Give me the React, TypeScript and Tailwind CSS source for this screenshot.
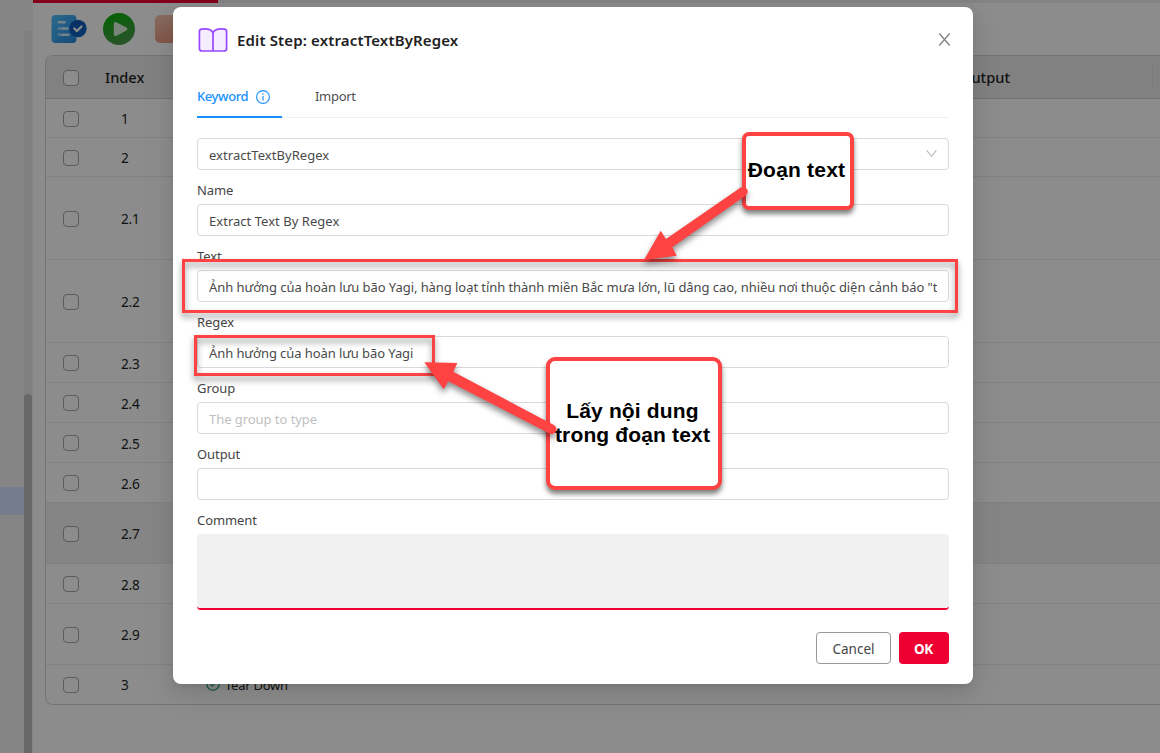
import type { ReactNode } from "react";

const rows = [
  { index: "1", height: "h-[39px]" },
  { index: "2", height: "h-[39px]" },
  { index: "2.1", height: "h-[83px]" },
  { index: "2.2", height: "h-[83px]" },
  { index: "2.3", height: "h-10" },
  { index: "2.4", height: "h-10" },
  { index: "2.5", height: "h-10" },
  { index: "2.6", height: "h-10" },
  { index: "2.7", height: "h-[61px]", active: true },
  { index: "2.8", height: "h-10" },
  { index: "2.9", height: "h-[61px]" },
  { index: "3", height: "h-[39px]", label: "Tear Down" },
];

function Checkbox() {
  return <span className="block size-4 shrink-0 rounded-[4px] border border-[#a6a6a6] bg-white" />;
}

function Toolbar() {
  return (
    <div className="flex h-[52px] items-center gap-4 pl-[18px]">
      <svg width="36" height="30" viewBox="0 0 36 30">
        <defs>
          <linearGradient id="doc" x1="0" y1="0" x2="1" y2="1">
            <stop offset="0" stopColor="#4fc3ff" />
            <stop offset="1" stopColor="#2488e0" />
          </linearGradient>
          <linearGradient id="badge" x1="0" y1="0" x2="1" y2="1">
            <stop offset="0" stopColor="#1550b0" />
            <stop offset="1" stopColor="#0b69c9" />
          </linearGradient>
        </defs>
        <rect x="0.5" y="1" width="25" height="28" rx="4" fill="url(#doc)" />
        <path d="M8 8.3h5.5M8 14.5h8.5M8 20.8h9.5" stroke="#d8eefc" strokeWidth="2.6" strokeLinecap="round" />
        <path d="M8 14.5h1.5M8 20.8h1.5" stroke="#8fd2fa" strokeWidth="2.6" strokeLinecap="round" />
        <circle cx="27" cy="14.5" r="8.7" fill="url(#badge)" />
        <path d="M23.3 14.5l2.7 2.6 4.5-4.6" fill="none" stroke="#fff" strokeWidth="2.2" strokeLinecap="round" strokeLinejoin="round" />
      </svg>
      <svg width="32" height="32" viewBox="0 0 32 32">
        <defs>
          <linearGradient id="play" x1="0" y1="0" x2="0.4" y2="1">
            <stop offset="0" stopColor="#00b400" />
            <stop offset="1" stopColor="#4a9a4a" />
          </linearGradient>
        </defs>
        <circle cx="16" cy="16" r="16" fill="url(#play)" />
        <path d="M12.5 10.8v10.6l10.2-5.3z" fill="#dcf0dc" stroke="#dcf0dc" strokeWidth="3.4" strokeLinejoin="round" />
      </svg>
      <div className="ml-1 h-7 w-7 rounded-[5px] bg-gradient-to-b from-[#f9c2ac] to-[#ee9f86]" />
    </div>
  );
}

function StepTable() {
  return (
    <div className="ml-3 overflow-hidden rounded-l-lg border border-r-0 border-[#d4d4d4]">
      <div className="flex h-[43px] items-center border-b border-[#d0d0d0] bg-[#ececec] pl-[17px] pt-0.5 text-[14.6px] font-medium">
        <Checkbox />
        <span className="ml-[26px] w-[855px]">Index</span>
        <span className="w-[192px]">Output</span>
        <span className="h-6 w-px bg-[#dedede]" />
      </div>
      {rows.map((row) => (
        <div
          key={row.index}
          className={`flex items-center border-b border-[#ebebeb] pl-[17px] pt-px text-[13.6px] last:border-b-0 ${row.height} ${row.active ? "bg-[#f2f2f2]" : ""}`}
        >
          <Checkbox />
          <span className={`ml-[42px] w-[85px] tracking-[-0.2px] ${row.label ? "" : "pt-0.5"}`}>{row.index}</span>
          {row.label && (
            <span className="flex items-center gap-[5px] text-[13px] tracking-[-0.25px]">
              <svg className="-mt-0.5" width="14" height="14" viewBox="0 0 14 14" fill="none" stroke="#25a56a" strokeWidth="1.3">
                <circle cx="7" cy="7" r="6.2" />
                <path d="M4.3 7.1l2 2 3.4-3.8" />
              </svg>
              <span className="pt-px">{row.label}</span>
            </span>
          )}
        </div>
      ))}
    </div>
  );
}

function Field({ label, children }: { label: string; children: ReactNode }) {
  return (
    <div>
      <div className="flex h-[34px] items-center pt-1.5 text-[13px] leading-5 tracking-[-0.08px] text-[#454545]">{label}</div>
      {children}
    </div>
  );
}

function TextBox({ value, placeholder, spacing = "tracking-[0.03px]" }: { value?: string; placeholder?: string; spacing?: string }) {
  return (
    <div className={`h-8 rounded-[4px] border border-[#d9d9d9] bg-white px-[11px] pt-px text-[13px] leading-[31px] text-[#4a4a4a] ${spacing}`}>
      <div className="overflow-hidden whitespace-nowrap">
        {value ?? <span className="tracking-[-0.05px] text-[#bfbfbf]">{placeholder}</span>}
      </div>
    </div>
  );
}

function StepDialog() {
  return (
    <div className="absolute left-[173px] top-[7px] h-[677px] w-[800px] rounded-lg bg-white px-6 shadow-[0_6px_16px_rgba(0,0,0,0.08),0_3px_6px_-4px_rgba(0,0,0,0.12),0_9px_28px_8px_rgba(0,0,0,0.05)]">
      <div className="flex h-[70px] items-center pb-1">
        <svg width="32" height="28" viewBox="0 0 32 28" fill="#f5edff" stroke="#9747ff" strokeWidth="1.7" strokeLinejoin="round">
          <path d="M16 6.5C14.3 3.8 9.6 2.3 4.6 3.1Q2.4 3.4 2.4 5.6V22.5Q2.4 25 5 25H27Q29.6 25 29.6 22.5V5.6Q29.6 3.4 27.4 3.1C22.4 2.3 17.7 3.8 16 6.5Z" />
          <path d="M16 6.5V25" />
        </svg>
        <h1 className="ml-2 text-[15px] font-semibold tracking-[0.14px] text-[#222]">Edit Step: extractTextByRegex</h1>
        <svg className="mb-[2px] ml-auto mr-[-2px]" width="13" height="13" viewBox="0 0 13 13" fill="none" stroke="#858585" strokeWidth="1.4">
          <path d="M1.3 0.5l10.4 12M11.7 0.5L1.3 12.5" />
        </svg>
      </div>
      <div className="flex h-[41px] border-b border-[#f0f0f0] text-[13px]">
        <div className="flex h-[41px] w-[85px] items-center border-b-2 border-[#1890ff] text-[#1890ff]">
          <span className="font-medium tracking-[-0.4px]">Keyword</span>
          <svg className="ml-2" width="14" height="14" viewBox="0 0 14 14" fill="none" stroke="#1890ff">
            <circle cx="7" cy="7" r="6.4" strokeWidth="1.1" />
            <path d="M7 6v4.5M7 3.5v1.2" strokeWidth="1.2" />
          </svg>
        </div>
        <div className="ml-[33px] flex h-[39px] items-center tracking-[-0.3px] text-[#505050]">Import</div>
      </div>
      <div className="mt-5 flex h-8 items-center justify-between rounded-[4px] border border-[#d9d9d9] pl-[11px] pr-[11px] text-[13px] tracking-[0.05px] text-[#4a4a4a]">
        <span className="pt-[3px]">extractTextByRegex</span>
        <svg width="11" height="8" viewBox="0 0 11 8" fill="none" stroke="#bfbfbf" strokeWidth="1.2">
          <path d="M0.7 0.3l4.8 6 4.8-6" />
        </svg>
      </div>
      <Field label="Name">
        <TextBox value="Extract Text By Regex" />
      </Field>
      <Field label="Text">
        <TextBox
          spacing="tracking-[-0.065px]"
          value={'Ảnh hưởng của hoàn lưu bão Yagi, hàng loạt tỉnh thành miền Bắc mưa lớn, lũ dâng cao, nhiều nơi thuộc diện cảnh báo "t'}
        />
      </Field>
      <Field label="Regex">
        <TextBox spacing="tracking-[-0.085px]" value="Ảnh hưởng của hoàn lưu bão Yagi" />
      </Field>
      <Field label="Group">
        <TextBox placeholder="The group to type" />
      </Field>
      <Field label="Output">
        <TextBox value="" />
      </Field>
      <Field label="Comment">
        <div className="h-[76px] rounded-[4px] border-b-2 border-[#ee0033] bg-[#f1f1f1]" />
      </Field>
      <div className="mt-[22px] flex h-8 justify-end gap-2 text-[13.5px]">
        <button className="w-[75px] rounded-[4px] border border-[#999] pt-0.5 text-[#444]">Cancel</button>
        <button className="w-[50px] rounded-[4px] bg-[#ee0033] pr-px pt-0.5 font-bold tracking-[-0.3px] text-white">OK</button>
      </div>
    </div>
  );
}

function Callouts() {
  return (
    <div className="pointer-events-none absolute inset-0 font-['Liberation_Sans',sans-serif] font-bold text-black">
      <div className="absolute left-[182px] top-[259px] h-[54px] w-[776px] border-[3px] border-[#ff4343] drop-shadow-[0_4px_3px_rgba(0,0,0,0.45)]" />
      <div className="absolute left-[194px] top-[335px] h-[41px] w-[241px] border-[3px] border-[#ff4343] drop-shadow-[0_4px_3px_rgba(0,0,0,0.45)]" />
      <div className="absolute left-[742px] top-[132px] flex h-[78px] w-[112px] items-center justify-center whitespace-nowrap rounded-[7px] border-4 border-[#ff4343] bg-white pr-[3px] text-[21px] leading-6 tracking-[0.2px] shadow-[0_4px_5px_rgba(0,0,0,0.5)]">
        <span className="-mt-0.5">Đoạn text</span>
      </div>
      <div className="absolute left-[546px] top-[357px] flex h-[133px] w-[176px] flex-col items-center justify-center whitespace-nowrap rounded-[9px] border-4 border-[#ff4343] bg-white pb-0.5 pr-[3px] text-[21px] leading-6 tracking-[0.15px] shadow-[0_4px_5px_rgba(0,0,0,0.5)]">
        <span>Lấy nội dung</span>
        <span>trong đoạn text</span>
      </div>
      <svg className="absolute inset-0 drop-shadow-[0_4px_3px_rgba(0,0,0,0.45)]" width="1160" height="753" viewBox="0 0 1160 753" fill="#ff4343">
        <path d="M644 260L660.7 230.7 666 239 740.3 187.8A4.7 4.7 0 0 1 745.7 195.6L672.3 247.3 676.7 255.7Z" />
        <path d="M424.3 362.3L457.3 363 453.3 371.7 553.9 425.1A4.7 4.7 0 0 1 549.5 433.5L448.3 381.3 443.7 389.3Z" />
      </svg>
    </div>
  );
}

export default function App() {
  return (
    <div className="relative flex h-[753px] w-[1160px] overflow-hidden bg-white font-['Noto_Sans',sans-serif] text-[#1f1f1f]">
      <aside className="flex w-[33px] shrink-0 bg-[#f2f2f2]">
        <div className="w-6 pt-[487px]">
          <div className="h-7 bg-[#d5e3ff]" />
        </div>
        <div className="mt-[31px] w-2 bg-[#e9e9e9] pt-[363px]">
          <div className="h-[359px] rounded-t-full bg-[#bdbdbd]" />
        </div>
      </aside>
      <main className="min-w-0 flex-1">
        <div className="h-[3px] bg-[#f0f0f0]">
          <div className="h-[3px] w-[185px] bg-[#ee0033]" />
        </div>
        <Toolbar />
        <StepTable />
      </main>
      <div className="absolute inset-0 bg-black/45" />
      <StepDialog />
      <Callouts />
    </div>
  );
}
